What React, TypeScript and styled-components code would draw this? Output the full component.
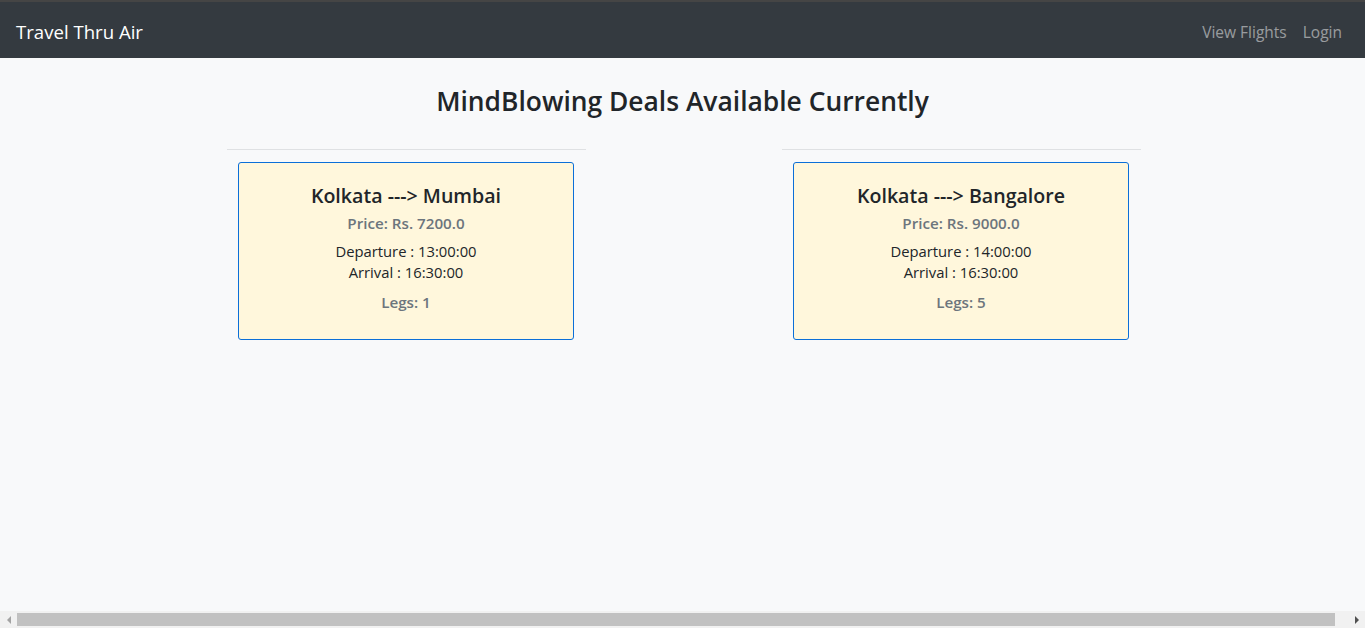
import React from "react";
import styled, { createGlobalStyle } from "styled-components";

const GlobalStyle = createGlobalStyle`
  html, body { margin: 0; padding: 0; }
  body {
    background: #f8f9fa;
    font-family: "Open Sans", "Noto Sans", sans-serif;
    color: #212529;
  }
`;

const Page = styled.div`
  min-height: 100vh;
  box-sizing: border-box;
  border-top: 2px solid #454545;
`;

const Navbar = styled.nav`
  height: 56px;
  background: #343a40;
  display: flex;
  align-items: center;
  justify-content: space-between;
  padding: 3px 23px 0 16px;
  box-sizing: border-box;
`;

const Brand = styled.a`
  color: #fff;
  font-size: 18.6px;
  text-decoration: none;
`;

const NavLinks = styled.div`
  display: flex;
  gap: 16px;
`;

const NavLink = styled.a`
  color: rgba(255, 255, 255, 0.5);
  font-size: 15.5px;
  text-decoration: none;
`;

const Main = styled.main`
  display: flex;
  flex-direction: column;
  align-items: center;
`;

const Title = styled.h2`
  margin: 24px 0 0;
  font-size: 26.4px;
  font-weight: 600;
  line-height: 38px;
  color: #212529;
`;

const Row = styled.div`
  display: flex;
  gap: 196px;
  margin-top: 29px;
  padding-left: 3px;
`;

const Column = styled.div`
  width: 359px;
  display: flex;
  flex-direction: column;
`;

const Rule = styled.hr`
  margin: 0;
  border: 0;
  border-top: 1px solid #dfe1e3;
`;

const Card = styled.div`
  margin: 12px 12px 0 11px;
  height: 178px;
  box-sizing: border-box;
  border: 1px solid #0b6fd8;
  border-radius: 3px;
  background: #fff7dc;
  display: flex;
  flex-direction: column;
  align-items: center;
  padding-top: 21px;
  text-align: center;
`;

const Route = styled.h5`
  margin: 0;
  font-size: 19.6px;
  font-weight: 600;
  line-height: 24px;
  color: #212529;
`;

const Muted = styled.div<{ $top: number }>`
  margin-top: ${(p) => p.$top}px;
  font-size: 15.2px;
  font-weight: 600;
  line-height: 24px;
  color: #6c757d;
`;

const Times = styled.div`
  margin-top: 6px;
  font-size: 14.8px;
  line-height: 21px;
  color: #212529;
`;

const ScrollBar = styled.div`
  position: fixed;
  left: 0;
  right: 0;
  bottom: 0;
  height: 17px;
  background: #f1f1f1;
  display: flex;
  align-items: center;
`;

const ScrollArrow = styled.div<{ $dir: "left" | "right" }>`
  width: 17px;
  height: 17px;
  display: flex;
  align-items: center;
  justify-content: center;
  &::before {
    content: "";
    width: 0;
    height: 0;
    border-top: 4px solid transparent;
    border-bottom: 4px solid transparent;
    ${(p) =>
      p.$dir === "left"
        ? "border-right: 4px solid #a3a3a3;"
        : "border-left: 4px solid #505050;"}
  }
`;

const ScrollTrack = styled.div`
  flex: 1;
  height: 13px;
  display: flex;
`;

const ScrollThumb = styled.div`
  width: 1318px;
  height: 13px;
  background: #c1c1c1;
`;

const deals = [
  { from: "Kolkata", to: "Mumbai", price: "7200.0", dep: "13:00:00", arr: "16:30:00", legs: 1 },
  { from: "Kolkata", to: "Bangalore", price: "9000.0", dep: "14:00:00", arr: "16:30:00", legs: 5 },
];

export default function App() {
  return (
    <>
      <GlobalStyle />
      <Page>
        <Navbar>
          <Brand href="#">Travel Thru Air</Brand>
          <NavLinks>
            <NavLink href="#">View Flights</NavLink>
            <NavLink href="#">Login</NavLink>
          </NavLinks>
        </Navbar>
        <Main>
          <Title>MindBlowing Deals Available Currently</Title>
          <Row>
            {deals.map((d) => (
              <Column key={d.to}>
                <Rule />
                <Card>
                  <Route>
                    {d.from} ---&gt; {d.to}
                  </Route>
                  <Muted $top={3}>Price: Rs. {d.price}</Muted>
                  <Times>
                    Departure : {d.dep}
                    <br />
                    Arrival : {d.arr}
                  </Times>
                  <Muted $top={7}>Legs: {d.legs}</Muted>
                </Card>
              </Column>
            ))}
          </Row>
        </Main>
      </Page>
      <ScrollBar>
        <ScrollArrow $dir="left" />
        <ScrollTrack>
          <ScrollThumb />
        </ScrollTrack>
        <ScrollArrow $dir="right" />
      </ScrollBar>
    </>
  );
}
